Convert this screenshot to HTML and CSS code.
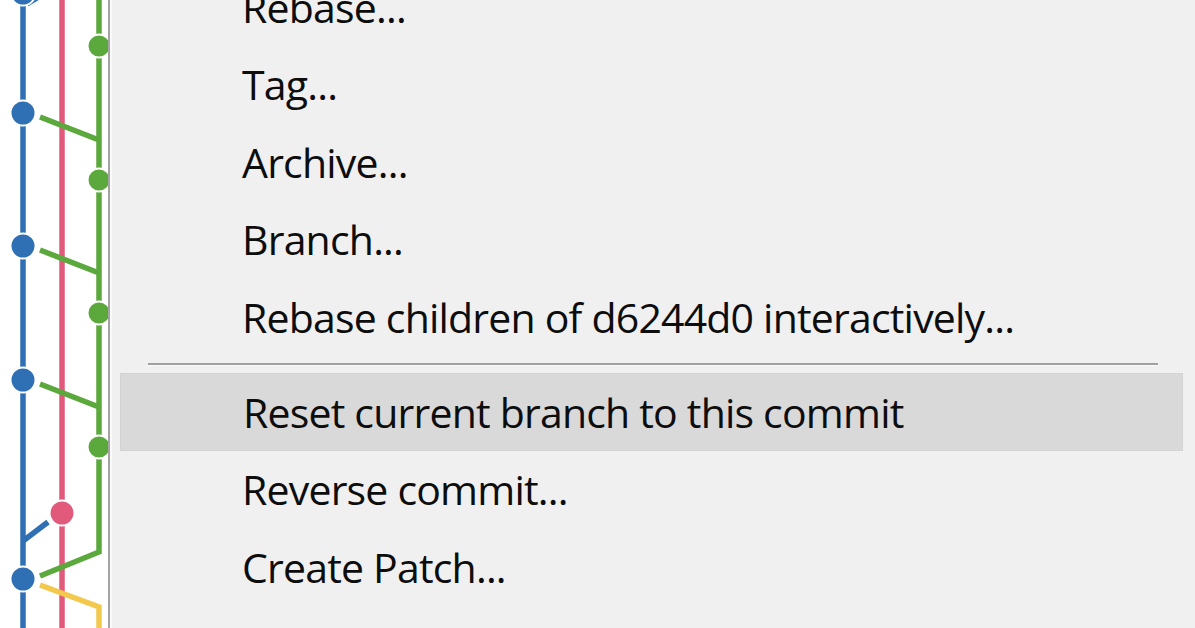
FILE: index.html
```html
<!DOCTYPE html>
<html>
<head>
<meta charset="utf-8">
<link rel="stylesheet" href="styles.css">
</head>
<body>
<div class="screen">
  <div class="graph">
    <svg width="108" height="628" viewBox="0 0 108 628">
      <g fill="none" stroke-width="5.5" stroke-linecap="butt" stroke-linejoin="miter">
        <line x1="23" y1="0" x2="23" y2="628" stroke="#2f6fb3"/>
        <line x1="62" y1="0" x2="62" y2="628" stroke="#e15a7c"/>
        <polyline points="99,0 99,552 40,576" stroke="#5ba83c"/>
        <line x1="40" y1="117" x2="99" y2="140" stroke="#5ba83c"/>
        <line x1="40" y1="250" x2="99" y2="273" stroke="#5ba83c"/>
        <line x1="40" y1="384" x2="99" y2="407" stroke="#5ba83c"/>
        <polyline points="40,585 99,607 99,628" stroke="#f2c94c"/>
        <line x1="48" y1="522" x2="23" y2="541" stroke="#2f6fb3"/>
        <line x1="27" y1="4" x2="40" y2="-4" stroke="#2f6fb3"/>
      </g>
      <g stroke="#ffffff" stroke-width="2">
        <circle cx="23" cy="-7" r="12.5" fill="#2f6fb3"/>
        <circle cx="23" cy="113" r="12.5" fill="#2f6fb3"/>
        <circle cx="23" cy="246" r="12.5" fill="#2f6fb3"/>
        <circle cx="23" cy="380" r="12.5" fill="#2f6fb3"/>
        <circle cx="23" cy="579" r="12.5" fill="#2f6fb3"/>
        <circle cx="99" cy="46" r="11.5" fill="#5ba83c"/>
        <circle cx="99" cy="180" r="11.5" fill="#5ba83c"/>
        <circle cx="99" cy="313" r="11.5" fill="#5ba83c"/>
        <circle cx="99" cy="447" r="11.5" fill="#5ba83c"/>
        <circle cx="62" cy="513" r="12.5" fill="#e15a7c"/>
      </g>
    </svg>
  </div>
  <div class="menu">
    <ul class="items">
      <li class="item">Rebase...</li>
      <li class="item">Tag...</li>
      <li class="item">Archive...</li>
      <li class="item">Branch...</li>
      <li class="item">Rebase children of d6244d0 interactively...</li>
      <li class="sep"></li>
      <li class="item active">Reset current branch to this commit</li>
      <li class="item">Reverse commit...</li>
      <li class="item">Create Patch...</li>
    </ul>
  </div>
</div>
</body>
</html>
```
FILE: styles.css
```css
html, body {
  margin: 0;
  padding: 0;
  background: #f0f0f0;
}
.screen {
  width: 1195px;
  height: 628px;
  overflow: hidden;
  display: flex;
}
.graph {
  width: 108px;
  flex: none;
  background: #ffffff;
  border-right: 2px solid #a3a3a3;
}
.graph svg {
  display: block;
}
.menu {
  flex: 1;
  background: #f0f0f0;
  border-left: 2px solid #fafafa;
}
.items {
  list-style: none;
  margin: -32px 0 0 0;
  padding: 0;
}
.item {
  height: 77.5px;
  box-sizing: border-box;
  margin: 0 12px 0 8px;
  padding-left: 122px;
  display: flex;
  align-items: center;
  font-family: "Open Sans", "Noto Sans", sans-serif;
  font-size: 41px;
  letter-spacing: -0.8px;
  color: #0d0d0d;
  white-space: nowrap;
}
.item.active {
  background: #d9d9d9;
  border: 1px solid #d3d3d3;
}
.sep {
  height: 17.5px;
  display: flex;
  align-items: center;
  margin: 0 37px 0 36px;
}
.sep::before {
  content: "";
  display: block;
  width: 100%;
  height: 2px;
  background: #a0a0a0;
  border-bottom: 1px solid #fbfbfb;
}
```
